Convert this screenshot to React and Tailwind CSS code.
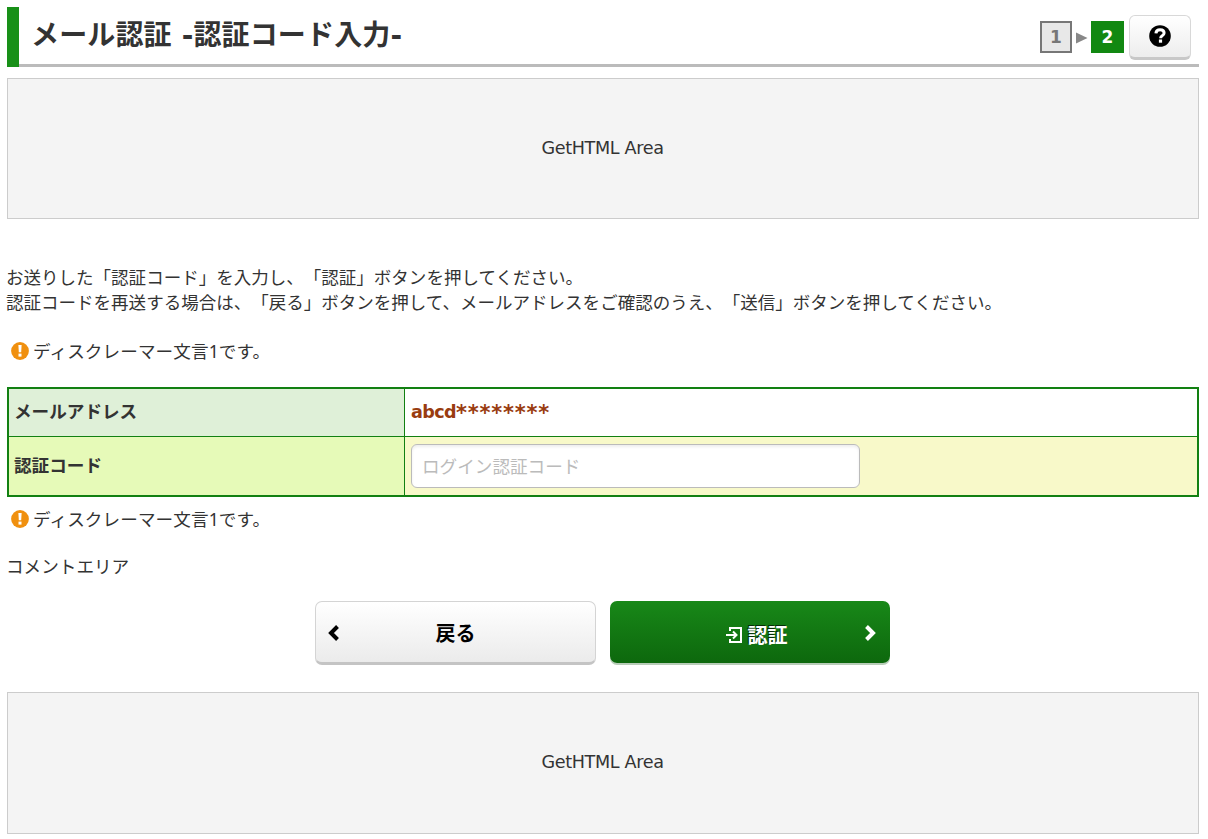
const jp = "font-['Noto_Sans','Noto_Sans_CJK_JP',sans-serif]";
const cjk = "font-['Noto_Sans_CJK_JP',sans-serif]";

function HtmlArea({ height = "h-[141px]" }) {
  return (
    <div className={`flex items-center justify-center border border-[#ccc] bg-[#f4f4f4] pr-px ${height}`}>
      <span className="font-['DejaVu_Sans',sans-serif] text-[17.6px] tracking-[-0.35px]">GetHTML Area</span>
    </div>
  );
}

function Disclaimer() {
  return (
    <p className="flex h-[26px] items-center pl-[4px]">
      <svg className="mr-[4px] h-[18px] w-[18px]" viewBox="0 0 18 18">
        <circle cx="9" cy="9" r="8.9" fill="#f0900f" />
        <path d="M7.4 3h3.2l-.4 7.2H7.8z" fill="#fff" />
        <rect x="7.5" y="11.6" width="3" height="3" fill="#fff" />
      </svg>
      <span className="tracking-[0.1px]">ディスクレーマー文言1です。</span>
    </p>
  );
}

export default function App() {
  return (
    <div className={`flex h-[839px] w-[1208px] flex-col bg-white pt-[7px] pr-[9px] pl-[7px] text-[17.6px] leading-[25px] text-[#333] [text-spacing-trim:space-all] ${jp}`}>
      <header className="flex h-[60px] shrink-0">
        <div className="w-[12px] bg-[#189018]" />
        <div className="flex flex-1 justify-between border-b-[3px] border-[#bbb] pl-[12px]">
          <h1 className="h-[57px] font-['DejaVu_Sans','Noto_Sans_CJK_JP',sans-serif] text-[28px] leading-[57px] font-bold tracking-[0.15px] whitespace-nowrap">メール認証 -認証コード入力-</h1>
          <div className="flex pt-[8px] pr-[8px] font-['DejaVu_Sans',sans-serif] text-[17px] font-bold">
            <div className="mt-[6px] flex h-[32px] w-[32px] items-center justify-center border-2 border-[#777] bg-[#e8e8e8] text-[#777]">1</div>
            <svg className="mt-[17px] ml-[4px] h-[12px] w-[12px]" viewBox="0 0 12 12">
              <path d="M0 .5 11.5 6 0 11.5z" fill="#888" />
            </svg>
            <div className="mt-[6px] ml-[3px] flex h-[32px] w-[33px] items-center justify-center bg-[#118811] text-white">2</div>
            <button className="ml-[5px] flex h-[45px] w-[62px] items-start justify-center rounded-[6px] border border-b-[3px] border-[#d8d8d8] border-b-[#c8c8c8] bg-gradient-to-b from-white to-[#ededed] pt-[9px]">
              <svg className="h-[22px] w-[22px]" viewBox="0 0 22 22">
                <circle cx="11" cy="11" r="10.8" fill="#000" />
                <path d="M6.900 8.300C7.100 5.900 8.800 4.700 11.1 4.700c2.400 0 4 1.300 4 3.300 0 2.700-3.500 2.600-3.500 5.200" fill="none" stroke="#fff" strokeWidth="3" />
                <rect x="9.9" y="14.5" width="3.200" height="3.200" fill="#fff" />
              </svg>
            </button>
          </div>
        </div>
      </header>

      <div className="mt-[11px]"><HtmlArea /></div>

      <div className="mt-[46px] -ml-px text-[17.53px] whitespace-nowrap">
        <p>お送りした「認証コード」を入力し、「認証」ボタンを押してください。</p>
        <p>認証コードを再送する場合は、「戻る」ボタンを押して、メールアドレスをご確認のうえ、「送信」ボタンを押してください。</p>
      </div>

      <div className="mt-[23px]"><Disclaimer /></div>

      <div className="mt-[23px] grid h-[110px] shrink-0 grid-cols-[396px_1fr] grid-rows-[48px_58px] border-2 border-[#128012] font-bold">
        <div className="flex items-center border-r border-b border-[#128012] bg-[#dff0d8] pb-[2px] pl-[5px]">メールアドレス</div>
        <div className="flex items-center border-b border-[#128012] pl-[6px] font-['DejaVu_Sans',sans-serif] text-[#993c10]">
          <span className="tracking-[-0.6px]">abcd</span>
          <span className="pt-[2px] text-[21px] tracking-[0.75px]">********</span>
        </div>
        <div className="flex items-center border-r border-[#128012] bg-[#e6fab8] pb-[2px] pl-[5px]">認証コード</div>
        <div className="flex items-center bg-[#f8f9c9] pl-[6px]">
          <input
            className="h-[44px] w-[449px] rounded-[6px] border border-[#bbb] bg-white px-[10px] font-normal shadow-[inset_0_2px_3px_rgba(0,0,0,0.07)] outline-none placeholder:text-[#bbb]"
            placeholder="ログイン認証コード"
          />
        </div>
      </div>

      <div className="mt-[9px]"><Disclaimer /></div>
      <p className="mt-[22px] -ml-px">コメントエリア</p>

      <div className={`mt-[22px] flex gap-[14px] pl-[308px] text-[20px] font-bold ${cjk}`}>
        <button className="grid h-[64px] w-[281px] grid-cols-[36px_1fr_36px] items-center rounded-[7px] border border-b-[3px] border-[#d4d4d4] border-b-[#c4c4c4] bg-gradient-to-b from-white to-[#ebebeb] text-black">
          <svg className="mt-[2px] ml-[11px] h-[16px] w-[13px]" viewBox="0 0 13 16">
            <path d="M10.5 1.5 4 8l6.500 6.500" fill="none" stroke="#000" strokeWidth="4" />
          </svg>
          <span>戻る</span>
        </button>
        <button className="grid h-[62px] w-[280px] grid-cols-[36px_1fr_36px] items-center rounded-[7px] bg-gradient-to-b from-[#188818] to-[#0d680d] text-white shadow-[0_2px_0_#b8ccb8]">
          <span />
          <span className="flex items-center justify-center gap-[5px] pt-[5px] pl-[13px]">
            <svg className="h-[18px] w-[17px]" viewBox="0 0 17 18" fill="none" stroke="#fff" strokeWidth="2">
              <path d="M4 5V2h11v14H4v-3M0 9h10M7 5.500 10.500 9 7 12.500" />
            </svg>
            <span className="[text-shadow:-1px_-1px_0_#052c05]">認証</span>
          </span>
          <svg className="mt-[2px] ml-[10px] h-[16px] w-[13px]" viewBox="0 0 13 16">
            <path d="M2.500 1.500 9 8l-6.500 6.500" fill="none" stroke="#fff" strokeWidth="4" />
          </svg>
        </button>
      </div>

      <div className="mt-[27px]"><HtmlArea height="h-[142px] pb-[2px]" /></div>
    </div>
  );
}
